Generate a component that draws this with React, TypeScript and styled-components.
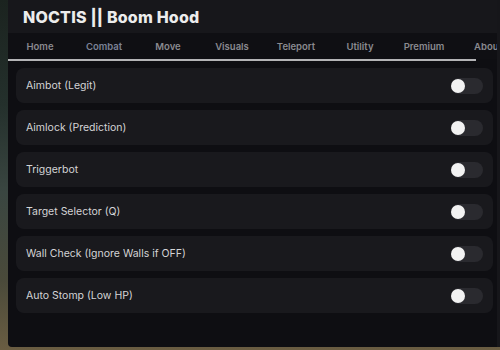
import React, { useState } from 'react';
import styled, { createGlobalStyle } from 'styled-components';

const GlobalStyle = createGlobalStyle`
  html, body {
    margin: 0;
    padding: 0;
    width: 500px;
    height: 350px;
    overflow: hidden;
    background: linear-gradient(180deg, #1b231f 0%, #24302c 30%, #3a4641 55%, #4a4a3a 80%, #6a5d42 100%);
    font-family: 'Inter', 'Liberation Sans', sans-serif;
  }
`;

const Window = styled.div`
  margin-left: 8px;
  width: 492px;
  height: 347px;
  background: #0e0e12;
  display: flex;
  flex-direction: column;
  overflow: hidden;
  border-right: 3px solid #16161a;
  box-sizing: border-box;
  border-bottom-left-radius: 4px;
`;

const Header = styled.div`
  height: 33px;
  background: #17171b;
  display: flex;
  align-items: center;
  padding-left: 15px;
`;

const Title = styled.h1`
  margin: 0;
  color: #ececec;
  font-size: 16px;
  font-weight: 800;
  letter-spacing: 0.2px;
`;

const TabBar = styled.div`
  height: 26px;
  display: flex;
  align-items: center;
  background: #0f0f13;
  white-space: nowrap;
  overflow: hidden;
`;

const Tab = styled.div<{ $active?: boolean }>`
  flex: 0 0 64px;
  text-align: center;
  font-size: 9.5px;
  font-weight: 600;
  color: ${p => (p.$active ? '#7c8296' : '#8a8a8f')};
`;

const Indicator = styled.div`
  width: 468px;
  height: 2px;
  background: #b4b4b6;
`;

const List = styled.div`
  flex: 1;
  display: flex;
  flex-direction: column;
  gap: 7px;
  padding: 7px 4px 0 8px;
`;

const Row = styled.div`
  height: 35px;
  border-radius: 8px;
  background: #19191d;
  display: flex;
  align-items: center;
  justify-content: space-between;
  padding: 0 10px;
`;

const Label = styled.span`
  color: #d4d4d6;
  font-size: 10.5px;
  font-weight: 400;
`;

const Track = styled.button<{ $on: boolean }>`
  width: 32px;
  height: 16px;
  border: none;
  padding: 0;
  border-radius: 8px;
  background: ${p => (p.$on ? '#5b6478' : '#2a2a2f')};
  display: flex;
  align-items: center;
  justify-content: ${p => (p.$on ? 'flex-end' : 'flex-start')};
  cursor: pointer;
`;

const Knob = styled.span`
  width: 14px;
  height: 14px;
  border-radius: 50%;
  background: #f2f2f2;
`;

const tabs = ['Home', 'Combat', 'Move', 'Visuals', 'Teleport', 'Utility', 'Premium', 'About'];

const features = [
  'Aimbot (Legit)',
  'Aimlock (Prediction)',
  'Triggerbot',
  'Target Selector (Q)',
  'Wall Check (Ignore Walls if OFF)',
  'Auto Stomp (Low HP)',
];

export default function App() {
  const [state, setState] = useState<boolean[]>(features.map(() => false));

  const toggle = (i: number) =>
    setState(s => s.map((v, j) => (j === i ? !v : v)));

  return (
    <>
      <GlobalStyle />
      <Window>
        <Header>
          <Title>NOCTIS || Boom Hood</Title>
        </Header>
        <TabBar>
          {tabs.map(t => (
            <Tab key={t} $active={t === 'Combat'}>
              {t}
            </Tab>
          ))}
        </TabBar>
        <Indicator />
        <List>
          {features.map((f, i) => (
            <Row key={f}>
              <Label>{f}</Label>
              <Track $on={state[i]} onClick={() => toggle(i)}>
                <Knob />
              </Track>
            </Row>
          ))}
        </List>
      </Window>
    </>
  );
}
